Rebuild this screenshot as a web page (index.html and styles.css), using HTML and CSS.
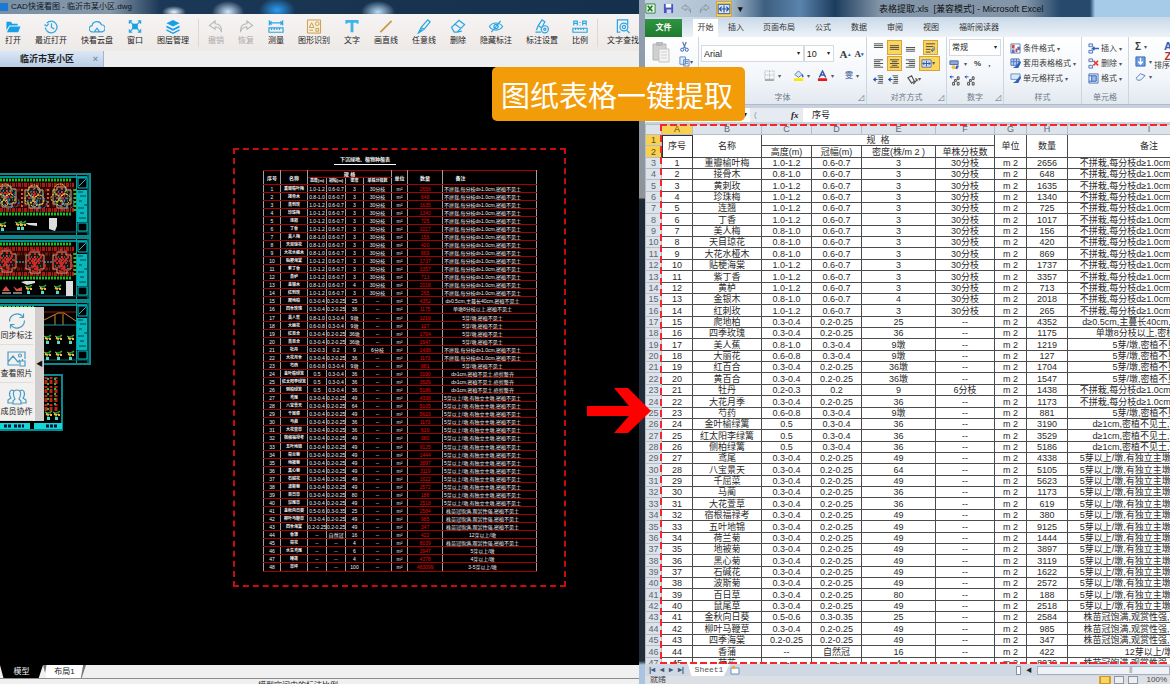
FILE: index.html
```
<!DOCTYPE html>
<html lang="zh-CN">
  <head>
    <meta charset="UTF-8" />
    <meta name="viewport" content="width=device-width, initial-scale=1.0" />
    <title>图纸表格一键提取</title>
    <link rel="stylesheet" href="styles.css">
  </head>
  <body>
    <svg class="sprite" aria-hidden="true">
      <symbol id="i-open" viewBox="0 0 16 16"><path d="M1 3h5l1 2h6v2H4L1 12z" fill="#16a0e8"/><path d="M4.500 8H16l-2.500 6H1.500z" fill="#16a0e8"/></symbol>
      <symbol id="i-recent" viewBox="0 0 16 16"><path d="M3.500 4.500A6.200 6.200 0 1 1 2 9M1 6l2.500 1.500L5.500 5M8.500 4.500V9l3 1.500" class="blue"/></symbol>
      <symbol id="i-cloud" viewBox="0 0 18 16"><path d="M5 14H4a3.500 3.500 0 0 1-.5-7A5.500 5.500 0 0 1 14 6a4 4 0 0 1 0 8h-2M6 14l3-4 3 4z" class="blue"/></symbol>
      <symbol id="i-window" viewBox="0 0 16 16"><path d="M5 5h6v6H5z" fill="#16a0e8"/><path d="M2 5V2h3M11 2h3v3M14 11v3h-3M5 14H2v-3M2 2l4 4M14 2l-4 4M2 14l4-4M14 14l-4-4" class="blue"/></symbol>
      <symbol id="i-layers" viewBox="0 0 16 16"><path d="M8 1l7 3.500L8 8 1 4.500z" fill="#16a0e8"/><path d="M1 7l7 3.500L15 7v2l-7 3.500L1 9zM1 11l7 3.500 7-3.500v1.500L8 16l-7-3.500z" fill="#16a0e8"/></symbol>
      <symbol id="i-undo" viewBox="0 0 16 16"><path d="M7 2L1 7l6 4V8.500c4 0 6 1.500 7 5.500.500-6-2.500-9-7-9z" class="grey"/></symbol>
      <symbol id="i-redo" viewBox="0 0 16 16"><path d="M9 2l6 5-6 4V8.500c-4 0-6 1.500-7 5.500C1.500 8 4.500 5 9 5z" class="grey"/></symbol>
      <symbol id="i-measure" viewBox="0 0 18 16"><path d="M1.500 1v6M16.500 1v6M2 4h14M4 2L2 4l2 2M14 2l2 2-2 2M1 9.500h16v5H1zM4 10v2M7 10v2M10 10v2M13 10v2" class="blue"/></symbol>
      <symbol id="i-shape" viewBox="0 0 16 16"><path d="M1 1h14v14H1z" fill="#f8efd8" stroke="#c79a45"/><path d="M3 9l2.500-5L8 9zM10 10h3v3h-3zM3 12h4" fill="none" stroke="#c79a45"/><circle cx="11.500" cy="5" r="2" fill="none" stroke="#c79a45"/></symbol>
      <symbol id="i-text" viewBox="0 0 16 16"><path d="M1 1h14v4h-2V4H9.500v10h-3V4H3v1H1z" fill="#3fb2ec"/></symbol>
      <symbol id="i-line" viewBox="0 0 16 16"><path d="M2 14L14 2" stroke="#c79a45" stroke-width="1.800"/></symbol>
      <symbol id="i-pen" viewBox="0 0 16 16"><path d="M2 15l3-6 7-8 2.500 2L8 11zM5 9l3 2M2 15l4-4" class="blue"/></symbol>
      <symbol id="i-eraser" viewBox="0 0 16 16"><path d="M1 9l8-7.500 6 4.500-8 8H4zM5 5.500l6 4.500M7 14l5-1" class="blue"/></symbol>
      <symbol id="i-hide" viewBox="0 0 16 16"><path d="M1 8c3-5 11-5 14 0-3 5-11 5-14 0zM3 14L13 2" class="blue"/><circle cx="8" cy="8" r="2.300" class="blue"/></symbol>
      <symbol id="i-setmark" viewBox="0 0 16 16"><path d="M1 14h6M2 12l2-5 4-6 3 2-3 6M4 7l3 2" class="blue"/><circle cx="11" cy="11" r="3.800" class="blue"/><circle cx="11" cy="11" r="1.200" class="blue"/></symbol>
      <symbol id="i-scale" viewBox="0 0 18 16"><path d="M1 10h16v4.500H1zM4 10v2M7 10v2M10 10v2M13 10v2M2 7V2h4v5M2 4.500h4M9 3v1M9 6v1M12 7V2h4v5M12 4.500h4" class="blue"/></symbol>
      <symbol id="i-find" viewBox="0 0 16 16"><path d="M5 14H2V1h11v5M12 12l3 3" class="blue"/><circle cx="9" cy="8.500" r="4.200" class="blue"/><circle cx="9" cy="8.500" r="1.700" class="blue"/></symbol>
      <symbol id="i-sync" viewBox="0 0 20 20"><path d="M2.500 10.500A7.500 7.500 0 0 1 16 6M17.500 9.500A7.500 7.500 0 0 1 4 14M16.500 2.500V6.500h-4M3.500 17.500v-4h4" class="steel"/></symbol>
      <symbol id="i-photo" viewBox="0 0 20 20"><path d="M12 16H1V3h17v7M1 13l5-6 5 6 2-2M13 12h5v5h-5zM15.500 10v2" class="steel"/><circle cx="13" cy="6.500" r="1.500" class="steel"/></symbol>
      <symbol id="i-team" viewBox="0 0 20 20"><path d="M7 4c-4-3-6 3-3 7l-3 2v3h5M13 4c4-3 6 3 3 7l3 2v3h-5M10 3c-5 0-4 6-2 9l-2 2v3h8v-3l-2-2c2-3 3-9-2-9z" class="steel"/></symbol>
      <symbol id="x-logo" viewBox="0 0 12 12"><path d="M1 1h10v10H1z" fill="#e9f5e6" stroke="#27832f"/><path d="M3 3l5 6M8 3L3 9" stroke="#1f7a2a" stroke-width="1.800"/></symbol>
      <symbol id="x-save" viewBox="0 0 12 12"><path d="M1 1h10v10H1z" fill="#4a55c0"/><path d="M3 1h6v4H3z" fill="#fff"/><path d="M4 7h5v4H4z" fill="#cfd4f4"/></symbol>
      <symbol id="x-paste" viewBox="0 0 20 22"><path d="M2 3h13v16H2z" fill="#d0d0d0" stroke="#b4b4b4"/><path d="M5 1h7v4H5z" fill="#b9b9b9"/><path d="M8 8h10v13H8z" fill="#f4f4f4" stroke="#c3c3c3"/><path d="M10 11h6M10 14h6M10 17h6" stroke="#cfcfcf"/></symbol>
      <symbol id="x-cut" viewBox="0 0 12 12"><path d="M4 1l3 7M8 1L5 8" stroke="#5c7ab0" stroke-width="1.300"/><circle cx="3.500" cy="9.500" r="1.700" fill="none" stroke="#2858b0"/><circle cx="8.500" cy="9.500" r="1.700" fill="none" stroke="#2858b0"/></symbol>
      <symbol id="x-copy" viewBox="0 0 12 12"><path d="M1 1h6v8H1zM5 4h6v7H5z" fill="#e4eefb" stroke="#5b86c4"/><path d="M6 6h4M6 8h4" stroke="#5b86c4"/></symbol>
      <symbol id="x-border" viewBox="0 0 12 12"><path d="M1 1h10v9H1zM6 1v9M1 5.500h10" fill="none" stroke="#aaa" stroke-dasharray="1 1"/><path d="M1 11h10" stroke="#666"/></symbol>
      <symbol id="x-fill" viewBox="0 0 12 12"><path d="M2 5l4-4 4 4-4 3z" fill="#dce7f5" stroke="#5577a8"/><path d="M10 5l1 3" stroke="#2b5ca8" stroke-width="1.500"/><path d="M1 9h10v3H1z" fill="#ffe600"/></symbol>
      <symbol id="x-color" viewBox="0 0 12 12"><path d="M2.500 8L6 1l3.500 7M4 5.500h4" fill="none" stroke="#3657a5" stroke-width="1.500"/><path d="M1 9h10v3H1z" fill="#e8151b"/></symbol>
      <symbol id="x-left" viewBox="0 0 12 12"><path d="M1 2h10M1 4h7M1 6h10M1 8h7M1 10h10" class="ink"/></symbol>
      <symbol id="x-center" viewBox="0 0 12 12"><path d="M1 2h10M3 4h6M1 6h10M3 8h6M1 10h10" class="ink"/></symbol>
      <symbol id="x-right" viewBox="0 0 12 12"><path d="M1 2h10M4 4h7M1 6h10M4 8h7M1 10h10" class="ink"/></symbol>
      <symbol id="x-top" viewBox="0 0 12 12"><path d="M1 2h10M1 4h10M1 6h10" class="ink"/></symbol>
      <symbol id="x-mid" viewBox="0 0 12 12"><path d="M1 4h10M1 6h10M1 8h10" class="ink"/></symbol>
      <symbol id="x-bot" viewBox="0 0 12 12"><path d="M1 6h10M1 8h10M1 10h10" class="ink"/></symbol>
      <symbol id="x-wrap" viewBox="0 0 12 12"><path d="M1 2h10M1 5h8M1 8h5M1 11h5" class="ink"/><path d="M10 5v4H7l1.500-2M7 9l1.500 2" fill="none" stroke="#2d64b5"/></symbol>
      <symbol id="x-merge" viewBox="0 0 12 12"><path d="M1 2h10v8H1z" fill="#dbe8fb" stroke="#54719e"/><path d="M2 6h8M4 4L2 6l2 2M8 4l2 2-2 2M6 3v6" fill="none" stroke="#28549b"/></symbol>
      <symbol id="x-indent" viewBox="0 0 12 12"><path d="M5 2h6M6 4h5M6 6h5M6 8h5M5 10h6" class="ink"/><path d="M5 6H1l2-2M1 6l2 2" fill="none" stroke="#2458b0" stroke-width="1.300"/></symbol>
      <symbol id="x-orient" viewBox="0 0 12 12"><path d="M1 4l4-2 3 6-3 2zM7 11l4-5M9 5l2 1v2" fill="none" stroke="#555" stroke-width="1.300"/></symbol>
      <symbol id="x-money" viewBox="0 0 12 12"><path d="M1 2h9v4H1z" fill="#8fa8dc" stroke="#4a68ac"/><circle cx="5" cy="9" r="2.200" fill="#f0c23b"/><path d="M8 7h3l-2 4H7z" fill="#3559b4"/></symbol>
      <symbol id="x-dec" viewBox="0 0 12 12"><path d="M5 2H1l2-1M1 2l2 1.500" stroke="#2458b0" fill="none"/><path d="M6 5h2v2H6zM9 2h2v3H9zM4 8h2v3H4zM9 8h2v3H9z" fill="none" stroke="#444"/></symbol>
      <symbol id="x-cond" viewBox="0 0 12 12"><path d="M1 1h10v10H1z" fill="#fff" stroke="#5b7fb8"/><path d="M2 2h3v4H2zM6 6h2v4H6z" fill="#d34545"/><path d="M2 7h3v4H2zM8 4h3v4H8z" fill="#4d74c2"/></symbol>
      <symbol id="x-tblfmt" viewBox="0 0 12 12"><path d="M1 1h9v7H1z" fill="#bdd3f4" stroke="#4d74b6"/><path d="M1 4h9M4 1v7M7 1v7" stroke="#4d74b6"/><path d="M11 3L6 9l-3 2 6 0 3-6z" fill="#2f63ba"/></symbol>
      <symbol id="x-cellstyle" viewBox="0 0 12 12"><path d="M1 1h10v6H1z" fill="#d9e6f8" stroke="#6d8fc4"/><path d="M11 3L6 9l-3 2 6 0 3-6z" fill="#2f63ba"/></symbol>
      <symbol id="x-ins" viewBox="0 0 12 12"><path d="M1 1h4v3H1zM1 8h4v3H1z" fill="#e4eefb" stroke="#4b72b2"/><path d="M12 6H5l2-2M5 6l2 2" fill="none" stroke="#2f63ba" stroke-width="1.500"/></symbol>
      <symbol id="x-del" viewBox="0 0 12 12"><path d="M1 1h4v3H1zM1 8h4v3H1z" fill="#e4eefb" stroke="#4b72b2"/><path d="M6 3l5 5M11 3L6 8" stroke="#e03a3a" stroke-width="1.800"/></symbol>
      <symbol id="x-fmt" viewBox="0 0 12 12"><path d="M1 1h10v10H1z" fill="#e4eefb" stroke="#4b72b2"/><path d="M4 3h5v6H4zM1 3h3M1 9h3" fill="#9abbe8" stroke="#2f63ba"/></symbol>
      <symbol id="x-down" viewBox="0 0 12 12"><path d="M1 1h10v10H1z" fill="#6b9ce4" stroke="#3a66b0"/><path d="M6 2v6M3.500 6L6 9l2.500-3" stroke="#fff" fill="none" stroke-width="1.500"/></symbol>
      <symbol id="x-clear" viewBox="0 0 12 12"><path d="M1 8l5-5 5 2-5 5H3z" fill="#eef4fc" stroke="#4a78bb"/></symbol>
    </svg>

    <div class="desktop">
      <section class="cad">
        <header class="cad-title"><i class="cad-logo"></i>CAD快速看图 - 临沂市某小区.dwg</header>

        <nav class="toolbar">
          <button><svg><use href="#i-open"/></svg>打开</button>
          <button><svg><use href="#i-recent"/></svg>最近打开</button>
          <button><svg><use href="#i-cloud"/></svg>快看云盘</button>
          <button><svg><use href="#i-window"/></svg>窗口</button>
          <button><svg><use href="#i-layers"/></svg>图层管理</button>
          <span class="sep"></span>
          <button disabled><svg><use href="#i-undo"/></svg>撤销</button>
          <button disabled><svg><use href="#i-redo"/></svg>恢复</button>
          <button><svg><use href="#i-measure"/></svg>测量</button>
          <button><svg><use href="#i-shape"/></svg>图形识别</button>
          <button><svg><use href="#i-text"/></svg>文字</button>
          <button><svg><use href="#i-line"/></svg>画直线</button>
          <button><svg><use href="#i-pen"/></svg>任意线</button>
          <button><svg><use href="#i-eraser"/></svg>删除</button>
          <button><svg><use href="#i-hide"/></svg>隐藏标注</button>
          <button><svg><use href="#i-setmark"/></svg>标注设置</button>
          <button><svg><use href="#i-scale"/></svg>比例</button>
          <span class="sep"></span>
          <button><svg><use href="#i-find"/></svg>文字查找</button>
        </nav>

        <div class="doc-tabs">
          <div class="doc-tab"><span>临沂市某小区</span><button aria-label="关闭">×</button></div>
        </div>

        <div class="canvas">
          <svg class="plans" viewBox="0 0 92 260" width="92" height="260" fill="none">
            <defs>
              <g id="frame">
                <path d="M0 2h90v62H0M0 5h87" stroke="#0a8a8e" stroke-width="2"/>
                <path d="M76.500 3v60M88 3v60" stroke="#0a9ea2"/>
                <path d="M0 60h88" stroke="#066"/>
                <path d="M82 18v32" stroke="#04b9be" stroke-width="10"/>
                <path d="M78 20h5M80 24h6M79 29h3M84 33h3M78 36h6M80 41h4M79 46h7" stroke="#013c40"/>
                <path d="M78 6h9v10h-9zM78 51h9v8h-9zM79 14l7-7" stroke="#00c8cc"/>
              </g>
              <g id="block">
                <path d="M0 10h74v30H0z" fill="#2a0705"/>
                <path d="M0 13h74M0 38h74" stroke="#a51c16" stroke-width="4" stroke-dasharray="3 1 1 1"/>
                <path d="M0 18h74M0 33h74" stroke="#6a1a12" stroke-width="3" stroke-dasharray="1 2 3 1"/>
                <path d="M0 8h72M0 42h72" stroke="#17c222" stroke-width="3" stroke-dasharray="2 1"/>
                <path d="M75 17v22" stroke="#1fc430" stroke-width="3" stroke-dasharray="2 2"/>
              </g>
              <g id="house">
                <path d="M0 4h4V1h9v3h5v14h-4v4H4v-4H0z" fill="#241414" stroke="#dca078"/>
                <path d="M3 8h12M3 12h12M9 2v19" stroke="#cf2222" stroke-width="2" stroke-dasharray="2 1"/>
                <path d="M2 6h15M2 10h15M2 15h15" stroke="#31b8b8" stroke-dasharray="1 2"/>
              </g>
              <g id="tree">
                <path d="M4 8V4L1 1l3 1 4-2-3 4" stroke="#2fb83c"/>
                <path d="M2 3l3 1M6 4h2" stroke="#ffb53d" stroke-width="2"/>
                <path d="M3 6h3v3H3z" fill="#57d8cf"/>
              </g>
              <g id="dots">
                <circle cx="9" cy="5" r="6"/><circle cx="4" cy="13" r="4"/><circle cx="14" cy="14" r="5"/><circle cx="9" cy="18" r="3"/>
              </g>
            </defs>
            <g>
              <use href="#frame"/><use href="#block"/>
              <use href="#house" x="-2" y="13"/><use href="#house" x="25" y="14"/><use href="#house" x="53" y="14"/>
              <g stroke="#f3e63a" stroke-dasharray="2 1"><use href="#dots" x="-4" y="13"/><use href="#dots" x="25" y="14"/><use href="#dots" x="51" y="13"/></g>
              <g stroke="#2ba7d6" stroke-dasharray="2 2"><use href="#dots" x="0" y="16"/><use href="#dots" x="28" y="17"/><use href="#dots" x="55" y="17"/></g>
              <path d="M22 17v20M48 17v20" stroke="#e05a3a" stroke-width="2" stroke-dasharray="2 2"/>
              <use href="#tree" x="-2" y="50"/><use href="#tree" x="14" y="49"/><use href="#tree" x="18" y="49"/>
              <path d="M21 49l4 2h12v3l-8-1zM49 46h8v8l-2 5-6-2z" fill="#ddd"/>
            </g>
            <g transform="translate(0 64)">
              <use href="#frame"/><use href="#block"/>
              <use href="#house" x="-2" y="14"/><use href="#house" x="26" y="15"/><use href="#house" x="53" y="15"/>
              <g stroke="#c72d27" stroke-width="2" stroke-dasharray="3 2"><use href="#dots" x="-3" y="14"/><use href="#dots" x="26" y="15"/><use href="#dots" x="53" y="15"/></g>
              <path d="M16 26h10M44 26h9" stroke="#42cbd2" stroke-dasharray="2 1"/>
              <path d="M2 55l4-5 4 5zM13 50l4 3 5-2v4h-6z" fill="#e04a3a"/><path d="M2 57h9M13 57h9" stroke="#eee"/>
              <use href="#tree" x="24" y="49"/><use href="#tree" x="38" y="49"/><use href="#tree" x="53" y="49"/>
              <path d="M21 46l4-1h10v2l-8 2zM66 45h7v15h-7z" fill="#ddd"/>
            </g>
            <g transform="translate(0 128)">
              <use href="#frame"/>
              <path d="M0 7h34" stroke="#2bcf38" stroke-width="2" stroke-dasharray="3 1"/><path d="M44 12h32" stroke="#941414"/>
              <path d="M44 20l14-7h6l12 8M55 15v10M63 14v11" stroke="#cc8a2c"/><path d="M44 25h32" stroke="#15979a"/>
              <use href="#tree" x="43" y="35"/><use href="#tree" x="54" y="35"/><use href="#tree" x="66" y="35"/>
              <use href="#tree" x="43" y="51"/><use href="#tree" x="54" y="51"/><use href="#tree" x="66" y="51"/>
            </g>
            <g>
              <path d="M0 203h62v55H0" stroke="#0a8a8e" stroke-width="2"/>
              <path d="M46 205v34M51 205v34M56 205v34" stroke="#be2419" stroke-width="3" stroke-dasharray="2 1 4 2"/>
              <path d="M48 206v34M55 206v28" stroke="#26be34" stroke-width="2" stroke-dasharray="2 3"/>
              <use href="#tree" x="44" y="239"/><use href="#tree" x="52" y="239"/>
              <path d="M0 254h30M34 254h28" stroke="#12d8dc" stroke-width="6"/>
              <path d="M4 254h8M14 254h10M46 254h11" stroke="#013" stroke-width="3" stroke-dasharray="3 1"/>
            </g>
          </svg>

          <aside class="side">
            <div class="side-list">
              <button><svg><use href="#i-sync"/></svg>同步标注</button>
              <button><svg><use href="#i-photo"/></svg>查看照片</button>
              <button><svg><use href="#i-team"/></svg>成员协作</button>
            </div>
            <button class="side-fold" aria-label="收起">◀</button>
          </aside>

          <div class="pick">
            <h2 class="pick-title">下沉绿地、植物种植表</h2>
            <table class="cad-table">
              <colgroup>
                <col class="w17"><col class="w27"><col class="w19"><col class="w19"><col class="w18"><col class="w28"><col class="w16"><col class="w35"><col>
              </colgroup>
              <thead>
                <tr><th rowspan="2">序号</th><th rowspan="2">名称</th><th colspan="4">规 格</th><th rowspan="2">单位</th><th rowspan="2">数量</th><th rowspan="2" class="memo">备注</th></tr>
                <tr><th>高度(m)</th><th>冠幅(m)</th><th>密度</th><th>单株分枝数</th></tr>
              </thead>
              <tbody id="cadRows"></tbody>
            </table>
          </div>
        </div>

        <div class="layout-tabs">
          <button class="model">模型</button>
          <button class="layout">布局1</button>
        </div>
        <footer class="cad-status">模型空间中的标注比例</footer>
      </section>

      <section class="excel">
        <header class="xl-title">
          <div class="quick">
            <svg><use href="#x-logo"/></svg>
            <svg><use href="#x-save"/></svg>
            <svg class="dim"><use href="#i-undo"/></svg>
            <svg class="dim"><use href="#i-redo"/></svg>
            <svg class="on"><use href="#x-merge"/></svg>
            <b>▾</b>
          </div>
          <span class="xl-name">表格提取.xls&nbsp; [兼容模式] - Microsoft Excel</span>
        </header>

        <nav class="xl-tabs">
          <button class="file">文件</button>
          <button class="active">开始</button>
          <button>插入</button>
          <button>页面布局</button>
          <button>公式</button>
          <button>数据</button>
          <button>审阅</button>
          <button>视图</button>
          <button>福昕阅读器</button>
        </nav>

        <div class="ribbon">
          <div class="group g-clip">
            <svg class="big"><use href="#x-paste"/></svg>
            <div class="stack"><svg><use href="#x-cut"/></svg><span><svg><use href="#x-copy"/></svg><i>▾</i></span></div>
          </div>
          <div class="group g-font">
            <div class="line">
              <label class="combo wide"><select aria-label="字体"><option>Arial</option></select></label>
              <label class="combo"><select aria-label="字号"><option>10</option></select></label>
              <button class="grow">A<sup>▴</sup></button>
              <button class="shrink">A<sup>▾</sup></button>
            </div>
            <div class="line tools">
              <button><svg><use href="#x-border"/></svg><i>▾</i></button>
              <button><svg><use href="#x-fill"/></svg><i>▾</i></button>
              <button><svg><use href="#x-color"/></svg><i>▾</i></button>
              <button class="wen">雯<i>▾</i></button>
            </div>
            <div class="cap">字体<em>◿</em></div>
          </div>
          <div class="group g-align">
            <div class="line"><svg><use href="#x-top"/></svg><svg class="on"><use href="#x-mid"/></svg><svg><use href="#x-bot"/></svg><svg class="on end"><use href="#x-wrap"/></svg></div>
            <div class="line"><svg><use href="#x-left"/></svg><svg class="on"><use href="#x-center"/></svg><svg><use href="#x-right"/></svg><button class="on"><svg><use href="#x-merge"/></svg><i>▾</i></button></div>
            <div class="line"><svg><use href="#x-indent"/></svg><svg><use href="#x-indent"/></svg><button class="end"><svg><use href="#x-orient"/></svg><i>▾</i></button></div>
            <div class="cap">对齐方式<em>◿</em></div>
          </div>
          <div class="group g-num">
            <label class="combo"><select aria-label="数字格式"><option>常规</option></select></label>
            <div class="line"><svg><use href="#x-money"/></svg><i>▾</i><b>%</b><b>,</b></div>
            <div class="line"><svg><use href="#x-dec"/></svg><svg><use href="#x-dec"/></svg></div>
            <div class="cap">数字<em>◿</em></div>
          </div>
          <div class="group g-style">
            <button><svg><use href="#x-cond"/></svg>条件格式<i>▾</i></button>
            <button><svg><use href="#x-tblfmt"/></svg>套用表格格式<i>▾</i></button>
            <button><svg><use href="#x-cellstyle"/></svg>单元格样式<i>▾</i></button>
            <div class="cap">样式</div>
          </div>
          <div class="group g-cell">
            <button><svg><use href="#x-ins"/></svg>插入<i>▾</i></button>
            <button><svg><use href="#x-del"/></svg>删除<i>▾</i></button>
            <button><svg><use href="#x-fmt"/></svg>格式<i>▾</i></button>
            <div class="cap">单元格</div>
          </div>
          <div class="group g-edit">
            <div class="stack">
              <button><b>Σ</b><i>▾</i></button>
              <button><svg><use href="#x-down"/></svg><i>▾</i></button>
              <button><svg><use href="#x-clear"/></svg><i>▾</i></button>
            </div>
            <button class="sort"><span class="az"><b>A</b><b>Z</b></span>排序和筛选</button>
          </div>
        </div>

        <div class="formula">
          <span class="name-box">A1<i>▾</i></span>
          <span class="round">(</span>
          <span class="fx">fx</span>
          <input value="序号" aria-label="编辑栏">
        </div>

        <div class="sheet">
          <table class="grid">
            <colgroup>
              <col class="c-no"><col class="c-a"><col class="c-b"><col class="c-c"><col class="c-d"><col class="c-e"><col class="c-f"><col class="c-g"><col class="c-h"><col class="c-i">
            </colgroup>
            <thead>
              <tr class="cols"><th></th><th class="sel">A</th><th>B</th><th>C</th><th>D</th><th>E</th><th>F</th><th>G</th><th>H</th><th>I</th></tr>
              <tr><th class="sel">1</th><td rowspan="2" class="cursor">序号</td><td rowspan="2">名称</td><td colspan="4">规&nbsp; 格</td><td rowspan="2">单位</td><td rowspan="2">数量</td><td rowspan="2">备注</td></tr>
              <tr><th class="sel">2</th><td>高度(m)</td><td>冠幅(m)</td><td>密度(株/m 2 )</td><td>单株分枝数</td></tr>
            </thead>
            <tbody id="xlRows"></tbody>
          </table>
          <div class="march"></div>
        </div>

        <div class="sheet-tabs">
          <span class="nav"><b>|◂</b><b>◂</b><b>▸</b><b>▸|</b></span>
          <button class="sheet-tab">Sheet1</button>
          <svg class="new-sheet" viewBox="0 0 12 10"><path d="M1 3h8v6H1z" fill="#fff" stroke="#6b8fc2"/><path d="M2 1h3v3H2z" fill="#f0a93a"/></svg>
          <span class="split"></span><b class="back">◀</b>
          <span class="hscroll">⦀</span>
        </div>
        <footer class="xl-status">
          <span class="ready">就绪</span>
          <span class="views"><i class="on"></i><i></i><i></i></span>
          <span>100%</span>
        </footer>
      </section>
    </div>

    <svg class="arrow" viewBox="0 0 64 46" width="64" height="46"><path d="M0 18h42L27 0h14l23 23-23 22H27l15-17H0z" fill="#fe0000"/></svg>
    <div class="callout">图纸表格一键提取</div>

    <script src="script.js"></script>
  </body>
</html>
```
FILE: styles.css
```
* {
  box-sizing: border-box;
}

body {
  margin: 0;
  height: 100vh;
  overflow: hidden;
  position: relative;
  font: 8px/10px "Liberation Sans", "Noto Sans CJK SC", sans-serif;
  color: #222;
  background: #000;
}

button,
input,
select {
  font: inherit;
  color: inherit;
  background: none;
  border: 0;
  padding: 0;
  margin: 0;
  white-space: nowrap;
}

i,
em {
  font-style: normal;
}

.sprite {
  display: none;
}

.blue {
  fill: none;
  stroke: #2aa5e6;
  stroke-width: 1.3;
}

.grey {
  fill: none;
  stroke: #b9b9b9;
  stroke-width: 1.2;
}

.steel {
  fill: none;
  stroke: #4b9cc4;
  stroke-width: 1.2;
}

.ink {
  fill: none;
  stroke: #444;
}

.desktop {
  display: grid;
  grid-template-columns: minmax(0, 639fr) minmax(0, 531fr);
  height: 100%;
}

/* drawing viewer */
.cad {
  display: flex;
  flex-direction: column;
  overflow: hidden;
  background: #000;
}

.cad-title {
  flex: none;
  height: 14px;
  display: flex;
  align-items: center;
  gap: 3px;
  overflow: hidden;
  white-space: nowrap;
  color: #10161e;
  background:
    radial-gradient(ellipse 12px 6px at 174px 12px, #e8f4ff, transparent),
    radial-gradient(ellipse 16px 11px at 228px 12px, #cfe6fa, transparent),
    radial-gradient(ellipse 18px 12px at 277px 10px, #2b9cf2, transparent),
    radial-gradient(ellipse 17px 11px at 378px 12px, #b9dcf7, transparent),
    linear-gradient(90deg, #7890a6 0, #8598aa 110px, #1b3857 160px, #17334f 60%, #14304c);
}

.cad-logo {
  width: 8px;
  height: 8px;
  background: #1c78d2;
}

.toolbar {
  flex: none;
  height: 37px;
  padding: 5px 0 0 5px;
  display: flex;
  gap: 14px;
  overflow: hidden;
  background: linear-gradient(#f6f4f3, #ede9e7);
}

.toolbar button {
  flex: none;
  display: flex;
  flex-direction: column;
  align-items: center;
  gap: 2px;
  height: 28px;
}

.toolbar button:disabled {
  color: #aaa;
}

.toolbar svg {
  width: 16px;
  height: 15px;
}

.sep {
  flex: none;
  width: 1px;
  height: 28px;
  margin: 0 -5px;
  background: #dcd8d6;
}

.doc-tabs {
  flex: none;
  height: 16px;
  background: #efefef;
}

.doc-tab {
  width: 104px;
  height: 16px;
  padding: 0 5px 0 20px;
  display: flex;
  justify-content: space-between;
  align-items: center;
  font-size: 9px;
  font-weight: bold;
  background: linear-gradient(#dbe7f5, #b9cde6);
  border-right: 1px solid #9fb5d0;
}

.doc-tab button {
  color: #8090a4;
}

.canvas {
  flex: 1;
  min-height: 0;
  position: relative;
  overflow: hidden;
}

.plans {
  position: absolute;
  left: 0;
  top: 105px;
}

.side {
  position: absolute;
  left: 0;
  top: 240px;
  display: flex;
}

.side-list {
  width: 35px;
  background: #f3f1ef;
}

.side-list button {
  width: 33px;
  height: 38px;
  display: flex;
  flex-direction: column;
  align-items: center;
  justify-content: center;
  border-bottom: 1px solid #dfdcda;
}

.side-list svg {
  width: 20px;
  height: 20px;
}

.side-fold {
  width: 9px;
  font-size: 7px;
  color: #111;
  background: #cfcdcb;
}

.pick {
  position: absolute;
  left: 233px;
  top: 81px;
  width: 333px;
  height: 439px;
  padding: 4px 27px 0 28px;
  border: 2px dashed #c80c0c;
  color: #f2f2f2;
}

.pick-title {
  width: 62px;
  margin: 0 0 5px 71px;
  font-size: 5px;
  line-height: 10px;
  font-weight: bold;
  text-align: center;
  white-space: nowrap;
  border-bottom: 1px solid #fff;
}

.cad-table {
  width: 100%;
  table-layout: fixed;
  border-collapse: collapse;
  border-right: 1px solid #aaa;
  font-size: 5px;
  line-height: 6px;
  text-align: center;
}

.cad-table th,
.cad-table td {
  padding: 0;
  height: 8px;
  white-space: nowrap;
  border: 1px solid #a0a0a0;
  border-top-color: #a80000;
  border-bottom-color: #a80000;
}

.cad-table thead th {
  height: 6px;
}

.cad-table thead tr + tr th {
  height: 7px;
  font-size: 4px;
}

.cad-table tbody tr:nth-child(16n) td {
  height: 9px;
}

.cad-table td:nth-child(2) {
  font-size: 4px;
  font-weight: bold;
}

.cad-table td:nth-child(8) {
  color: #f00000;
}

.cad-table td:nth-child(9) {
  padding-right: 14px;
}

.cad-table .memo {
  padding-right: 58px;
}

.w17 { width: 17px; }
.w27 { width: 27px; }
.w19 { width: 19px; }
.w18 { width: 18px; }
.w28 { width: 28px; }
.w16 { width: 16px; }
.w35 { width: 35px; }

.layout-tabs {
  flex: none;
  height: 14px;
  display: flex;
  background: #f0f0f0;
  border-bottom: 1px solid #8b8b8b;
}

.layout-tabs button {
  width: 43px;
  height: 13px;
  clip-path: polygon(0 0, 100% 0, 90% 100%, 8% 100%);
}

.layout-tabs .model {
  color: #eee;
  background: #000;
}

.layout-tabs .layout {
  background: linear-gradient(100deg, #777 3px, #fff 4px, #fff 39px, #777 40px);
}

.cad-status {
  flex: none;
  height: 5px;
  padding: 2px 0 0 258px;
  overflow: hidden;
  background: #f0f0f0;
}

/* spreadsheet window */
.excel {
  display: flex;
  flex-direction: column;
  overflow: hidden;
  background: #dfe6ee;
  border-left: 6px solid;
  border-image: linear-gradient(#8fa0b2 0, #8e9499 198px, #1d2a36 200px, #222c36 660px, #a8c4e0 664px) 1;
}

.xl-title {
  flex: none;
  height: 17px;
  display: flex;
  align-items: center;
  position: relative;
  font-size: 9px;
  white-space: nowrap;
  color: #111;
  background:
    linear-gradient(90deg, #c3d3e0 0, #a9bed0 85px, #3d5f80 120px, #5b83ac 155px, #1c3c5e 190px, #8396a9 235px, #8396a9 380px, #27496c 415px, #27496c 445px, #a5cbe9 450px);
}

.quick {
  display: flex;
  align-items: center;
  gap: 7px;
}

.quick svg {
  width: 11px;
  height: 11px;
}

.quick .dim {
  opacity: 0.8;
}

.quick .dim use {
  filter: brightness(0.7);
}

.quick .on {
  width: 14px;
  height: 14px;
}

.xl-name {
  margin-left: 136px;
}

.on {
  background: #fbd560;
  outline: 1px solid #d5a337;
}

.xl-tabs {
  flex: none;
  height: 20px;
  padding-top: 2px;
  display: flex;
  overflow: hidden;
  color: #333;
  background: linear-gradient(#c9d9e8, #edf2f8);
}

.xl-tabs button {
  flex: none;
  padding: 0 10px;
}

.xl-tabs .file {
  width: 37px;
  margin-right: 11px;
  padding: 0;
  color: #fff;
  font-weight: bold;
  background: linear-gradient(#2f9440, #1f7b2e);
}

.xl-tabs .active {
  width: 25px;
  padding: 0;
  background: #fff;
}

.xl-tabs .active + button {
  padding-right: 9px;
}

.ribbon {
  flex: none;
  height: 68px;
  display: flex;
  overflow: hidden;
  color: #3a3a3a;
  background: linear-gradient(#fff, #f3f6fa 60%, #e3e9f0);
  border-bottom: 1px solid #b1bccb;
}

.ribbon svg {
  flex: none;
  width: 11px;
  height: 11px;
}

.ribbon i {
  font-size: 6px;
  color: #555;
}

.group {
  flex: none;
  position: relative;
  padding: 4px 6px 14px;
  border-right: 1px solid #cdd5df;
  overflow: hidden;
}

.line,
.stack span,
.group button {
  display: flex;
  align-items: center;
}

.cap {
  position: absolute;
  left: 0;
  right: 0;
  bottom: 1px;
  text-align: center;
  color: #6d7886;
}

.cap em {
  position: absolute;
  right: 2px;
}

.combo {
  position: relative;
  display: flex;
  height: 17px;
  width: 30px;
  padding-left: 2px;
  font-size: 9px;
  color: #222;
  background: #fff;
  border: 1px solid #d5dae1;
}

.combo::after {
  content: "▾";
  position: absolute;
  right: 3px;
  top: 2px;
  font-size: 6px;
}

.combo select {
  appearance: none;
  width: 100%;
}

.g-clip {
  width: 54px;
  display: flex;
  gap: 8px;
}

.g-clip .big {
  width: 20px;
  height: 22px;
}

.stack {
  display: flex;
  flex-direction: column;
  gap: 4px;
}

.g-font {
  width: 168px;
  padding: 8px 2px 0;
}

.g-font .wide {
  width: 103px;
}

.g-font .grow,
.g-font .shrink {
  margin-left: 6px;
  font: bold 11px "Liberation Serif", serif;
}

.g-font .shrink {
  margin-left: 4px;
  font-size: 9px;
}

.g-font sup {
  font-size: 5px;
  color: #2d64b5;
}

.g-font .tools {
  margin: 8px 0 0 63px;
  gap: 7px;
}

.g-font .tools button {
  gap: 3px;
}

.g-font .tools button:first-child {
  margin-right: 5px;
}

.g-font .wen {
  margin-left: 4px;
  color: #2d4f92;
}

.g-align {
  width: 80px;
  padding: 2px 6px;
}

.g-align .line {
  height: 16px;
  gap: 4px;
}

.g-align .on {
  padding: 1px;
  width: 13px;
  height: 13px;
}

.g-align button.on {
  width: 19px;
}

.g-align .end {
  margin-left: 4px;
}

.g-num {
  width: 57px;
  padding: 2px 2px;
}

.g-num .combo {
  width: 52px;
  font-size: 8px;
}

.g-num .line {
  height: 16px;
  gap: 4px;
}

.g-num b {
  margin-left: 3px;
}

.g-style {
  width: 78px;
}

.g-cell {
  width: 47px;
}

.g-style button,
.g-cell button {
  height: 15px;
  gap: 2px;
}

.g-edit {
  flex: 1;
  display: flex;
  border: 0;
}

.g-edit .stack button {
  height: 11px;
  gap: 3px;
}

.g-edit .stack b {
  font-size: 10px;
}

.g-edit .sort {
  margin-left: 2px;
  flex-direction: column;
  align-items: flex-start;
}

.az {
  display: flex;
  flex-direction: column;
  padding-left: 10px;
  font-size: 11px;
  color: #2d5fb8;
}

.az b + b {
  color: #b03030;
}

.formula {
  flex: none;
  height: 19px;
  padding: 3px 0 2px;
  display: flex;
  background: #c8d1dc;
}

.formula .name-box {
  width: 105px;
  display: flex;
  justify-content: space-between;
  padding: 2px 3px;
  background: #fff;
}

.formula .round {
  width: 34px;
  padding: 2px 4px;
  color: #8a94a0;
  background: #e6ebf1;
}

.formula .fx {
  width: 19px;
  padding: 2px 7px;
  font: italic bold 9px/10px "Liberation Serif", serif;
  background: #e6ebf1;
}

.formula input {
  flex: 1;
  min-width: 0;
  padding-left: 9px;
  font-size: 9px;
  background: #fff;
}

.sheet {
  flex: 1;
  min-height: 0;
  position: relative;
  overflow: hidden;
  background: #fff;
}

.grid {
  width: 585px;
  table-layout: fixed;
  border-collapse: collapse;
  font-size: 9px;
  line-height: 10px;
  text-align: center;
  color: #2a2a2a;
}

.grid th,
.grid td {
  height: 11px;
  padding: 0;
  white-space: nowrap;
  border: 1px solid #4c4c4c;
}

.grid th {
  font-weight: normal;
  color: #5e6670;
  background: #dde3ea;
  border-color: #b6bec9;
}

.grid .cols th {
  height: 10px;
  line-height: 9px;
}

.grid thead th.sel {
  color: #5f4b12;
  background: #f9d150;
}

.grid .cursor {
  outline: 1px solid #333;
  outline-offset: -1px;
}

/* the row pitch alternates between 11 and 12 */
.grid tbody tr:nth-child(11n + 3) td,
.grid tbody tr:nth-child(11n + 6) td,
.grid tbody tr:nth-child(11n + 9) td,
.grid tbody tr:nth-child(11n + 11) td,
.grid thead tr:nth-child(3) td {
  height: 12px;
}

.c-no { width: 16px; }
.c-a { width: 31px; }
.c-b { width: 69px; }
.c-c { width: 50px; }
.c-d { width: 50px; }
.c-e { width: 74px; }
.c-f { width: 59px; }
.c-g { width: 32px; }
.c-h { width: 41px; }
.c-i { width: 163px; }

.march {
  position: absolute;
  inset: 0 -4px 0 15px;
  background:
    repeating-linear-gradient(90deg, #f5252b 0 7px, transparent 7px 10px) top / 100% 2px no-repeat,
    repeating-linear-gradient(90deg, #f5252b 0 7px, transparent 7px 10px) bottom / 100% 2px no-repeat,
    repeating-linear-gradient(#f5252b 0 7px, transparent 7px 11px) left / 2px 100% no-repeat;
}

.sheet-tabs {
  flex: none;
  height: 12px;
  display: flex;
  align-items: center;
  background: #cfd8e3;
}

.nav {
  width: 43px;
  padding: 0 4px;
  display: flex;
  justify-content: space-between;
  color: #41597c;
}

.sheet-tab {
  width: 42px;
  height: 12px;
  font: 8px/10px "Liberation Mono", monospace;
  color: #555;
  background: #fff;
  clip-path: polygon(0 0, 100% 0, 85% 100%, 8% 100%);
}

.new-sheet {
  width: 12px;
  height: 10px;
}

.split {
  width: 5px;
  height: 9px;
  margin-left: 274px;
  border: 1px solid #8493a6;
  background: #fff;
}

.back {
  margin: 0 5px;
  font-size: 6px;
}

.hscroll {
  flex: 1;
  height: 9px;
  padding-left: 91px;
  color: #8793a3;
  background: #eef2f7;
  border: 1px solid #a5b1c0;
  overflow: hidden;
  line-height: 7px;
}

.xl-status {
  flex: none;
  height: 8px;
  padding: 0 3px 0 5px;
  display: flex;
  gap: 9px;
  overflow: hidden;
  line-height: 8px;
  color: #4a4a4a;
  background: #dcdfe3;
}

.ready {
  margin-right: auto;
}

.views {
  display: flex;
  gap: 4px;
}

.views i {
  width: 10px;
  height: 8px;
  border: 1px solid #8a94a2;
  background: #eee;
}

.views .on {
  background: #fbd560;
  border-color: #c99a2c;
}

/* overlay on both windows */
.arrow {
  position: absolute;
  left: 587px;
  top: 388px;
}

.callout {
  position: absolute;
  left: 492px;
  top: 67px;
  padding: 5px 12px 5px 9px;
  font: 29px/44px "Noto Sans CJK SC", sans-serif;
  color: #fff;
  white-space: nowrap;
  background: #f29c09;
  border-radius: 5px;
}
```
FILE: script.js
```
// remarks shared by many plants
const A = "不拼栽,每分枝d≥1.0cm,密植不见土";
const B = "5芽/墩,密植不见土";
const C = "d≥1cm,密植不见土,修剪整齐";
const D = "5芽以上/墩,有独立主墩,密植不见土";
const E = "株苗冠饱满,观赏性强,密植不见土";

// name, height, crown, density, branches, quantity, remark
const plants = [
  ["重瓣榆叶梅", "1.0-1.2", "0.6-0.7", "3", "30分枝", "2656", A],
  ["接骨木", "0.8-1.0", "0.6-0.7", "3", "30分枝", "648", A],
  ["黄刺玫", "1.0-1.2", "0.6-0.7", "3", "30分枝", "1635", A],
  ["珍珠梅", "1.0-1.2", "0.6-0.7", "3", "30分枝", "1340", A],
  ["连翘", "1.0-1.2", "0.6-0.7", "3", "30分枝", "725", A],
  ["丁香", "1.0-1.2", "0.6-0.7", "3", "30分枝", "1017", A],
  ["美人梅", "0.8-1.0", "0.6-0.7", "3", "30分枝", "156", A],
  ["天目琼花", "0.8-1.0", "0.6-0.7", "3", "30分枝", "420", A],
  ["大花水桠木", "0.8-1.0", "0.6-0.7", "3", "30分枝", "869", A],
  ["贴梗海棠", "1.0-1.2", "0.6-0.7", "3", "30分枝", "1737", A],
  ["紫丁香", "1.0-1.2", "0.6-0.7", "3", "30分枝", "3357", A],
  ["黄栌", "1.0-1.2", "0.6-0.7", "3", "30分枝", "713", A],
  ["金银木", "0.8-1.0", "0.6-0.7", "4", "30分枝", "2018", A],
  ["红刺玫", "1.0-1.2", "0.6-0.7", "3", "30分枝", "265", A],
  ["爬地柏", "0.3-0.4", "0.2-0.25", "25", "--", "4352", "d≥0.5cm,主蔓长40cm,密植不见土"],
  ["四季玫瑰", "0.3-0.4", "0.2-0.25", "36", "--", "1175", "单墩8分枝以上,密植不见土"],
  ["美人蕉", "0.8-1.0", "0.3-0.4", "9墩", "--", "1219", B],
  ["大丽花", "0.6-0.8", "0.3-0.4", "9墩", "--", "127", B],
  ["红百合", "0.3-0.4", "0.2-0.25", "36墩", "--", "1704", B],
  ["黄百合", "0.3-0.4", "0.2-0.25", "36墩", "--", "1547", B],
  ["牡丹", "0.2-0.3", "0.2", "9", "6分枝", "1438", A],
  ["大花月季", "0.3-0.4", "0.2-0.25", "36", "--", "1173", A],
  ["芍药", "0.6-0.8", "0.3-0.4", "9墩", "--", "881", B],
  ["金叶榆绿篱", "0.5", "0.3-0.4", "36", "--", "3190", C],
  ["红太阳李绿篱", "0.5", "0.3-0.4", "36", "--", "3529", C],
  ["侧柏绿篱", "0.5", "0.3-0.4", "36", "--", "5186", C],
  ["鸢尾", "0.3-0.4", "0.2-0.25", "49", "--", "4338", D],
  ["八宝景天", "0.3-0.4", "0.2-0.25", "64", "--", "5105", D],
  ["千屈菜", "0.3-0.4", "0.2-0.25", "49", "--", "5623", D],
  ["马蔺", "0.3-0.4", "0.2-0.25", "36", "--", "1173", D],
  ["大花萱草", "0.3-0.4", "0.2-0.25", "36", "--", "619", D],
  ["宿根福禄考", "0.3-0.4", "0.2-0.25", "49", "--", "380", D],
  ["五叶地锦", "0.3-0.4", "0.2-0.25", "49", "--", "9125", D],
  ["荷兰菊", "0.3-0.4", "0.2-0.25", "49", "--", "1444", D],
  ["地被菊", "0.3-0.4", "0.2-0.25", "49", "--", "3897", D],
  ["黑心菊", "0.3-0.4", "0.2-0.25", "49", "--", "3119", D],
  ["石碱花", "0.3-0.4", "0.2-0.25", "49", "--", "1622", D],
  ["波斯菊", "0.3-0.4", "0.2-0.25", "49", "--", "2572", D],
  ["百日草", "0.3-0.4", "0.2-0.25", "80", "--", "188", D],
  ["鼠尾草", "0.3-0.4", "0.2-0.25", "49", "--", "2518", D],
  ["金秋向日葵", "0.5-0.6", "0.3-0.35", "25", "--", "2584", E],
  ["柳叶马鞭草", "0.3-0.4", "0.2-0.25", "49", "--", "985", E],
  ["四季海棠", "0.2-0.25", "0.2-0.25", "49", "--", "347", E],
  ["香蒲", "--", "自然冠", "16", "--", "422", "12芽以上/墩"],
  ["荷花", "--", "--", "4", "--", "8039", E],
  ["水生鸢尾", "--", "--", "6", "--", "3947", "5芽以上/墩"],
  ["睡莲", "--", "--", "4", "--", "4378", "4芽以上/墩"],
  ["草坪", "--", "--", "100", "--", "483099", "3-5芽以上/墩"],
];

function cells(plant, index, unit) {
  const [name, height, crown, density, branches, count, remark] = plant;
  return [index + 1, name, height, crown, density, branches, unit, count, remark]
    .map((value) => `<td>${value}</td>`)
    .join("");
}

document.getElementById("cadRows").innerHTML = plants
  .map((plant, i) => `<tr>${cells(plant, i, "m²")}</tr>`)
  .join("");

document.getElementById("xlRows").innerHTML = plants
  .slice(0, 45)
  .map((plant, i) => `<tr><th>${i + 3}</th>${cells(plant, i, "m 2")}</tr>`)
  .join("");
```
